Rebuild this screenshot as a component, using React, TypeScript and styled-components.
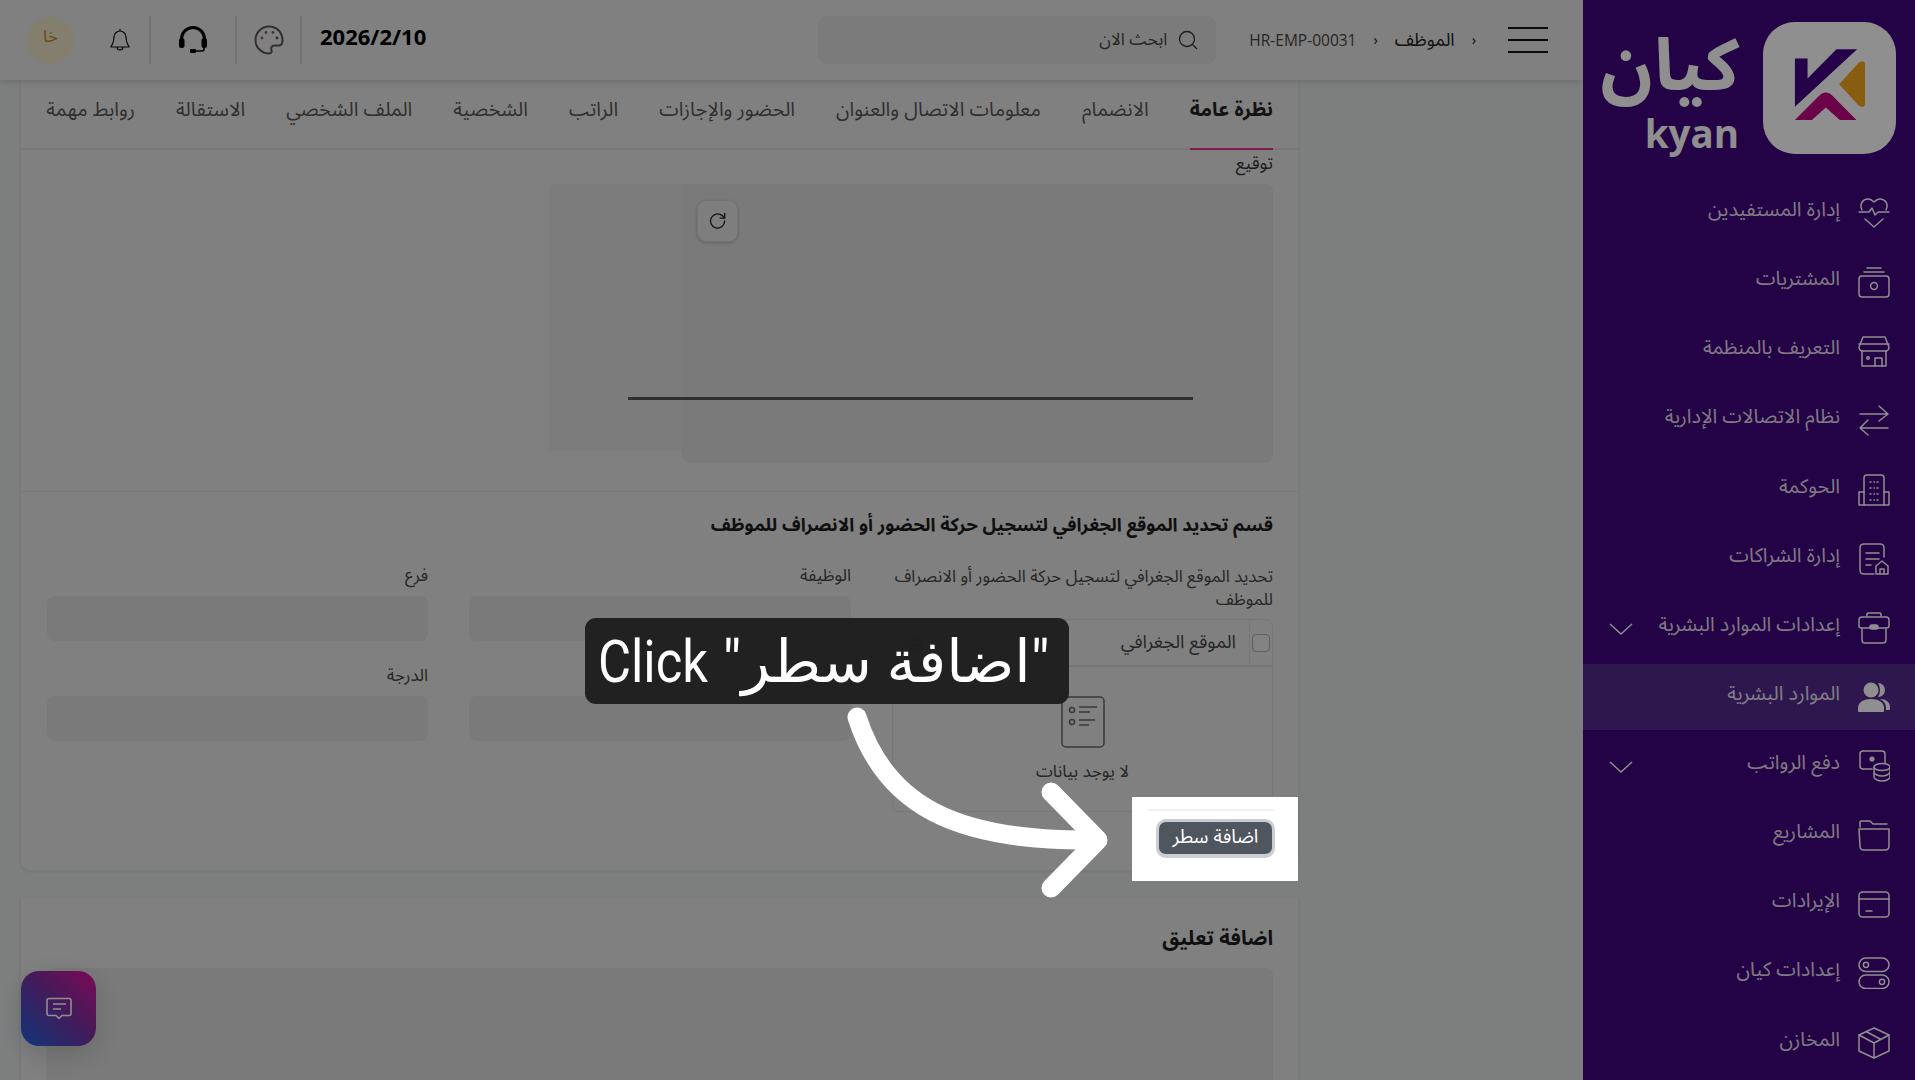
import * as React from 'react'
import styled, { createGlobalStyle } from 'styled-components'

const FONT = `"Noto Sans Arabic", "DejaVu Sans", "Noto Sans", sans-serif`

const Global = createGlobalStyle`
  html, body { margin: 0; padding: 0; background: #dfe3e3; }
  * { box-sizing: border-box; }
  body { font-family: ${FONT}; }
`

const Page = styled.div`
  position: relative;
  width: 1915px;
  height: 1080px;
  overflow: hidden;
  display: grid;
  grid-template-columns: 332px 1fr;
  direction: rtl;
  background: #dfe3e3;
`

/* sidebar */
const Side = styled.aside`
  background: #3f047c;
  display: flex;
  flex-direction: column;
  height: 1080px;
  overflow: hidden;
`
const Brand = styled.div`
  height: 180px;
  flex: none;
  display: flex;
  padding: 22px 19px 0 0;
  gap: 24px;
`
const Tile = styled.div`
  width: 133px;
  height: 132px;
  border-radius: 32px;
  background: #fff;
  display: flex;
  align-items: center;
  justify-content: center;
  flex: none;
`
const Wordmark = styled.div`
  color: #fff;
  display: flex;
  flex-direction: column;
  align-items: flex-start;
  width: 138px;
`
const WordAr = styled.div`
  font-size: 72px;
  font-weight: 700;
  line-height: 90px;
  height: 92px;
  white-space: nowrap;
`
const WordEn = styled.div`
  font-family: "Open Sans", sans-serif;
  font-size: 38.5px;
  font-weight: 700;
  line-height: 38px;
  direction: ltr;
`
const Nav = styled.nav`
  display: flex;
  flex-direction: column;
  gap: 3.14px;
`
const NavRow = styled.div<{ $active?: boolean }>`
  height: 66px;
  flex: none;
  display: flex;
  align-items: center;
  gap: 18px;
  padding: 0 25px 0 26px;
  color: #fff;
  background: ${p => (p.$active ? '#52298d' : 'transparent')};
  svg { flex: none; }
`
const NavText = styled.span`
  font-size: 19.8px;
  margin-top: -6px;
  opacity: .85;
  flex: 1;
  white-space: nowrap;
`

/* main column */
const Main = styled.main`
  position: relative;
  display: flex;
  flex-direction: column;
  min-width: 0;
  height: 1080px;
  overflow: hidden;
`
const Topbar = styled.header`
  height: 80px;
  flex: none;
  background: #e4e4e4;
  box-shadow: 0 2px 6px rgba(0,0,0,.14);
  display: flex;
  align-items: center;
  padding: 0 35px 0 27px;
  position: relative;
  z-index: 2;
`
const Burger = styled.div`
  width: 40px;
  height: 26px;
  flex: none;
  display: flex;
  flex-direction: column;
  justify-content: space-between;
  span { display: block; height: 2px; background: #111; }
`
const Crumbs = styled.div`
  display: flex;
  align-items: center;
  gap: 17px;
  margin-right: 32px;
  font-size: 18px;
  color: #222;
  white-space: nowrap;
`
const CrumbSep = styled.span`
  font-size: 14px;
  color: #222;
`
const CrumbId = styled.span`
  font-family: "Open Sans", sans-serif;
  font-size: 15.5px;
  color: #444;
  direction: ltr;
`
const Search = styled.div`
  width: 398px;
  height: 48px;
  margin-right: 33px;
  border-radius: 9px;
  background: #dcdcdc;
  display: flex;
  align-items: center;
  gap: 11px;
  padding: 0 18px;
  color: #444;
  font-size: 17px;
  flex: none;
`
const Tools = styled.div`
  margin-right: auto;
  display: flex;
  align-items: center;
  height: 48px;
`
const DateText = styled.div`
  font-family: "Open Sans", sans-serif;
  font-weight: 700;
  font-size: 22px;
  color: #000;
  direction: ltr;
  margin: -8px 0 0 18px;
`
const ToolCell = styled.div<{ $w: number }>`
  width: ${p => p.$w}px;
  height: 48px;
  border-right: 2px solid #cbcbcb;
  display: flex;
  align-items: center;
  justify-content: center;
`
const Avatar = styled.div`
  width: 47px;
  height: 47px;
  margin-right: 17px;
  border-radius: 50%;
  background: #ece0c4;
  color: #b78a2a;
  font-size: 17px;
  display: flex;
  align-items: center;
  justify-content: center;
  padding-bottom: 6px;
`

/* content */
const Body = styled.div`
  flex: 1;
  min-height: 0;
  padding: 0 284px 0 20px;
  display: flex;
  flex-direction: column;
  gap: 27px;
`
const Card = styled.section`
  flex: none;
  background: #e4e4e4;
  border: 1px solid #dadada;
  border-top: 0;
  border-radius: 0 0 10px 10px;
  box-shadow: 0 1px 3px rgba(0,0,0,.08);
`
const Tabs = styled.div`
  height: 70px;
  display: flex;
  gap: 41px;
  padding: 0 25px;
  border-bottom: 2px solid #d4d4d4;
`
const Tab = styled.div<{ $active?: boolean }>`
  height: 70px;
  line-height: 60px;
  font-size: 19.7px;
  white-space: nowrap;
  color: ${p => (p.$active ? '#222' : '#555')};
  font-weight: ${p => (p.$active ? 700 : 400)};
  border-bottom: ${p => (p.$active ? '2px solid #e0308f' : '0')};
`
const SignSection = styled.div`
  height: 342px;
  padding: 0 25px;
  border-bottom: 1px solid #d6d6d6;
`
const SignLabel = styled.div`
  font-size: 17.5px;
  line-height: 28px;
  height: 34px;
  color: #333;
`
const SignBox = styled.div`
  position: relative;
  width: 591px;
  height: 279px;
  background: #d9d9d9;
  border-radius: 8px;
`
const SignCanvas = styled.div`
  position: absolute;
  top: 0;
  right: 0;
  width: 724px;
  height: 267px;
  background: linear-gradient(to left, #d9d9d9 591px, #dddddd 591px);
  border-radius: 8px 8px 0 0;
`
const SignLine = styled.div`
  position: absolute;
  top: 213px;
  left: -54px;
  width: 565px;
  height: 3px;
  background: #555;
`
const RefreshBtn = styled.div`
  position: absolute;
  top: 16px;
  left: 15px;
  width: 41px;
  height: 42px;
  border: 1px solid #cfcfcf;
  border-radius: 9px;
  background: #e0e0e0;
  box-shadow: 0 1px 3px rgba(0,0,0,.2);
  display: flex;
  align-items: center;
  justify-content: center;
`
const GeoSection = styled.div`
  padding: 21px 25px 0;
  height: 378px;
`
const SectionTitle = styled.h2`
  margin: 0;
  font-size: 18.3px;
  line-height: 24px;
  font-weight: 700;
  color: #1c1c1c;
  white-space: nowrap;
`
const FieldGrid = styled.div`
  margin-top: 28px;
  display: grid;
  grid-template-columns: 381px 382px 381px;
  column-gap: 41px;
`
const GeoCol = styled.div`
  display: flex;
  flex-direction: column;
`
const Column = styled.div`
  display: flex;
  flex-direction: column;
  gap: 24px;
`
const Field = styled.div`
  display: flex;
  flex-direction: column;
  gap: 9px;
`
const FieldLabel = styled.label`
  font-size: 17px;
  line-height: 22px;
  height: 22px;
  color: #444;
`
const FieldInput = styled.div`
  height: 45px;
  border-radius: 8px;
  background: #d9d9d9;
`
const GeoHint = styled.div`
  font-size: 16.9px;
  line-height: 23px;
  color: #444;
  height: 54px;
`
const GeoTable = styled.div`
  height: 193px;
  border: 1px solid #d4d4d4;
  border-radius: 8px;
  display: flex;
  flex-direction: column;
`
const GeoHead = styled.div`
  height: 47px;
  flex: none;
  display: flex;
  align-items: center;
  border-bottom: 2px solid #d4d4d4;
  font-size: 18.5px;
  color: #444;
`
const CheckCell = styled.div`
  width: 23px;
  height: 46px;
  border-left: 1px solid #d4d4d4;
  display: flex;
  align-items: center;
  justify-content: center;
  flex: none;
`
const Check = styled.div`
  width: 18px;
  height: 18px;
  border: 1.5px solid #aaa;
  border-radius: 4px;
  background: #e8e8e8;
`
const GeoName = styled.div`
  flex: 1;
  padding-right: 13px;
  height: 46px;
  line-height: 46px;
  border-left: 1px solid #d4d4d4;
`
const GearCell = styled.div`
  width: 41px;
  display: flex;
  justify-content: center;
`
const EmptyState = styled.div`
  flex: 1;
  display: flex;
  flex-direction: column;
  align-items: center;
  padding: 29px 0 0 0;
  gap: 6px;
  font-size: 17px;
  color: #444;
`
const CommentBox = styled.div`
  margin: 0 25px;
  height: 150px;
  border-radius: 8px 8px 0 0;
  background: #d9d9d9;
`
const CommentTitle = styled(SectionTitle)`
  padding: 29px 25px 17px;
  font-size: 20.5px;
`
const ChatFab = styled.div`
  position: absolute;
  left: 21px;
  top: 971px;
  width: 75px;
  height: 75px;
  border-radius: 18px;
  background: linear-gradient(45deg, #1e60d8 0%, #7b2fa0 55%, #e0109a 100%);
  box-shadow: 0 8px 24px rgba(0,0,0,.14);
  display: flex;
  align-items: center;
  justify-content: center;
  z-index: 3;
`

/* coach mark, laid over the whole page */
const Scrim = styled.div`
  position: absolute;
  inset: 0;
  background: rgba(0,0,0,.44);
  z-index: 5;
`
const Callout = styled.div`
  position: absolute;
  left: 585px;
  top: 618px;
  width: 484px;
  height: 86px;
  padding: 2px 0 0 13px;
  border-radius: 11px;
  background: rgba(30,30,30,.97);
  color: #fff;
  font-family: Roboto, "DejaVu Sans", sans-serif;
  font-weight: 400;
  font-size: 59px;
  line-height: 84px;
  white-space: nowrap;
  direction: ltr;
  z-index: 7;
`
const CalloutWord = styled.span`
  display: inline-block;
  transform: scaleX(.86);
  transform-origin: left center;
  margin-right: -18px;
`
const Spotlight = styled.div`
  position: absolute;
  left: 1132px;
  top: 797px;
  width: 166px;
  height: 84px;
  background: #fff;
  z-index: 6;
  padding: 12px 24px 0 10px;
  direction: rtl;
`
const SpotRule = styled.div`
  height: 2px;
  background: #eef0f2;
  margin: 0 0 8px 6px;
  border-radius: 0 0 6px 6px;
`
const AddRow = styled.div`
  width: 119px;
  height: 39px;
  margin-right: -1px;
  border-radius: 10px;
  background: #4f565e;
  border: 3px solid #c9ced3;
  border-bottom-width: 4px;
  color: #fff;
  font-size: 19px;
  display: flex;
  align-items: center;
  justify-content: center;
  padding-bottom: 3px;
  white-space: nowrap;
`
const ArrowLayer = styled.svg`
  position: absolute;
  left: 0;
  top: 0;
  z-index: 7;
`

const line = { fill: 'none', stroke: 'currentColor', strokeWidth: 1.5, strokeLinecap: 'round', strokeLinejoin: 'round' } as const

const I32 = ({ children }: { children: React.ReactNode }) => (
  <svg width="32" height="32" viewBox="0 0 32 32" {...line}>{children}</svg>
)

const navItems: { label: string; icon: React.ReactNode; caret?: boolean; active?: boolean }[] = [
  { label: 'إدارة المستفيدين', icon: <I32><path d="M4 13C1 7 5 2 10 2c3 0 5 2 6 3 1-1 3-3 6-3 5 0 9 5 6 11" /><path d="M1 15h10l3-4 3 7 3-3h11" /><path d="M7 22l9 8 9-8" /></I32> },
  { label: 'المشتريات', icon: <I32><path d="M9 2h14M6 6h20" /><rect x="1" y="10" width="30" height="21" rx="3" /><circle cx="16" cy="20" r="3.4" /></I32> },
  { label: 'التعريف بالمنظمة', icon: <I32><path d="M5 2h22l4 10c0 3-2 4-4 4H5c-2 0-4-1-4-4z" /><path d="M1 9h30" /><path d="M4 16v15h24V16" /><path d="M17 31v-8h7v8" /><circle cx="10" cy="23" r="1.2" /></I32> },
  { label: 'نظام الاتصالات الإدارية', icon: <I32><path d="M2 10h28M21 2l9 8-9 7" /><path d="M30 24H2M10 16l-8 8 8 7" /></I32> },
  { label: 'الحوكمة', icon: <I32><path d="M6 31V4q0-3 3-3h14q3 0 3 3v27" /><path d="M6 18H1v13h30V18h-5" /><path d="M12 8h1M19 8h1M12 14h1M19 14h1M12 20h1M19 20h1M12 26h1M19 26h1M16 8h.5M16 14h.5M16 20h.5M16 26h.5" /></I32> },
  { label: 'إدارة الشراكات', icon: <I32><path d="M26 14V5q0-4-4-4H6Q2 1 2 5v22q0 4 4 4h10" /><path d="M8 10h13M8 16h13M8 22h5" /><path d="M18 31V23l6-5 6 5v8zM22 31v-5h4v5" /></I32> },
  { label: 'إعدادات الموارد البشرية', caret: true, icon: <I32><path d="M9 4V2q0-1 1-1h12q1 0 1 1v2" /><path d="M1 8q0-3 3-3h24q3 0 3 3v6q0 2-3 2H4q-3 0-3-2zM4 17v11q0 3 3 3h18q3 0 3-3V17" /><rect x="12" y="13" width="8" height="4" rx="2" fill="currentColor" /></I32> },
  { label: 'الموارد البشرية', active: true, icon: <svg width="32" height="32" viewBox="0 0 32 32" fill="currentColor"><circle cx="13" cy="9" r="7.5" /><path d="M0 30v-3c0-6 6-9 13-9s13 3 13 9v3q0 1-1 1H1q-1 0-1-1z" /><path d="M20 2a7 7 0 0 1 0 14q2-3 2-7t-2-7zM22 18c6 0 10 3 10 8v2q0 1-1 1h-3v-2c0-4-2-7-6-9z" /></svg> },
  { label: 'دفع الرواتب', caret: true, icon: <I32><path d="M14 19H5q-3 0-3-3V4q0-3 3-3h19q3 0 3 3v9" /><circle cx="14" cy="9" r="1.8" fill="currentColor" /><ellipse cx="24" cy="17" rx="8" ry="3.5" /><path d="M16 17v10c0 2 4 4 8 4s8-2 8-4V17M16 22c0 2 4 4 8 4s8-2 8-4" /></I32> },
  { label: 'المشاريع', icon: <I32><path d="M2 8V3q0-1 1-1h9l3 3h14" /><path d="M1 10h30v17q0 4-4 4H6q-4 0-4-4z" /></I32> },
  { label: 'الإيرادات', icon: <I32><rect x="1" y="4" width="30" height="25" rx="3.5" /><path d="M1 11h30M8 23h6" /></I32> },
  { label: 'إعدادات كيان', icon: <I32><rect x="1" y="1" width="30" height="13.5" rx="6.7" /><rect x="1" y="18" width="30" height="13.5" rx="6.7" /><circle cx="8" cy="7.8" r="2.6" /><circle cx="24" cy="24.8" r="2.6" /></I32> },
  { label: 'المخازن', icon: <I32><path d="M16 1l15 7v16l-15 7-15-7V8z" /><path d="M1 8l15 8 15-8M16 16v15M8 4.5l15 8" /></I32> },
]

const tabs = ['نظرة عامة', 'الانضمام', 'معلومات الاتصال والعنوان', 'الحضور والإجازات', 'الراتب', 'الشخصية', 'الملف الشخصي', 'الاستقالة', 'روابط مهمة']

const Caret = styled.svg`
  margin-top: 2px;
`

export default function App() {
  return (
    <Page>
      <Global />
      <Side>
        <Brand>
          <Tile>
            <svg width="133" height="132" viewBox="550 65 398 397">
              <path d="M645 175h38v60l87-88h62L645 320z" fill="#400484" />
              <path d="M778 252l60-66q18-8 18 10v112q0 18-18 10z" fill="#f5a61d" />
              <path d="M645 360l76-76q17-14 34 0l75 76h-50l-42-38-42 38z" fill="#c00683" />
            </svg>
          </Tile>
          <Wordmark>
            <WordAr>كيان</WordAr>
            <WordEn>kyan</WordEn>
          </Wordmark>
        </Brand>
        <Nav>
          {navItems.map(item => (
            <NavRow key={item.label} $active={item.active}>
              {item.icon}
              <NavText>{item.label}</NavText>
              {item.caret && (
                <Caret width="24" height="14" viewBox="0 0 24 14" fill="none" stroke="currentColor" strokeWidth="1.5">
                  <path d="M1 2l11 10L23 2" />
                </Caret>
              )}
            </NavRow>
          ))}
        </Nav>
      </Side>

      <Main>
        <Topbar>
          <Burger><span /><span /><span /></Burger>
          <Crumbs>
            <CrumbSep>‹</CrumbSep>
            <span>الموظف</span>
            <CrumbSep>‹</CrumbSep>
            <CrumbId>HR-EMP-00031</CrumbId>
          </Crumbs>
          <Search>
            <svg width="20" height="20" viewBox="0 0 20 20" fill="none" stroke="#333" strokeWidth="1.3"><circle cx="9" cy="9" r="7.5" /><path d="M14.5 14.5L19 19" /></svg>
            <span>ابحث الان</span>
          </Search>
          <Tools>
            <DateText>2026/2/10</DateText>
            <ToolCell $w={65}>
              <svg width="30" height="30" viewBox="0 0 30 30" fill="none" stroke="#555" strokeWidth="2">
                <path d="M15 1.5C7.5 1.5 1.5 7.5 1.5 15S7.5 28.5 15 28.5c2.5 0 3-1.500 2.500-3-.8-2.500 0-5 3-5h4c2.500 0 4-1.500 4-5C28.500 7 22.500 1.500 15 1.500z" />
                <circle cx="8" cy="13" r="1.4" fill="#8a5a60" stroke="none" /><circle cx="12" cy="7.500" r="1.400" fill="#8a5a60" stroke="none" /><circle cx="19" cy="7.500" r="1.400" fill="#7a5a8a" stroke="none" /><circle cx="23" cy="13" r="1.400" fill="#555" stroke="none" />
              </svg>
            </ToolCell>
            <ToolCell $w={86}>
              <svg width="28" height="28" viewBox="0 0 28 28" fill="none" stroke="#000" strokeWidth="3">
                <path d="M2.500 15V13a11.500 11.500 0 0 1 23 0v2" />
                <rect x="0" y="12" width="5.500" height="10" rx="2.500" fill="#000" stroke="none" /><rect x="22.500" y="12" width="5.500" height="10" rx="2.500" fill="#000" stroke="none" />
                <path d="M25 20v3q0 2-2 2h-6" strokeWidth="1.600" /><rect x="11" y="23" width="6" height="4" rx="1" fill="#000" stroke="none" />
              </svg>
            </ToolCell>
            <ToolCell $w={60}>
              <svg width="20" height="24" viewBox="0 0 20 24" fill="none" stroke="#111" strokeWidth="1.200" strokeLinejoin="round">
                <path d="M10 3a6 6 0 0 0-6 6c0 6-2 7-3 10h18c-1-3-3-4-3-10a6 6 0 0 0-6-6zM10 1v2M7 19a3 3 0 0 0 6 0" />
              </svg>
            </ToolCell>
            <Avatar>خا</Avatar>
          </Tools>
        </Topbar>

        <Body>
          <Card>
            <Tabs>
              {tabs.map((t, i) => <Tab key={t} $active={i === 0}>{t}</Tab>)}
            </Tabs>
            <SignSection>
              <SignLabel>توقيع</SignLabel>
              <SignBox>
                <SignCanvas />
                <SignLine />
                <RefreshBtn>
                  <svg width="20" height="20" viewBox="0 0 24 24" fill="none" stroke="#222" strokeWidth="1.600" strokeLinecap="round">
                    <path d="M20 12a8.500 8.500 0 1 1-3-6.500L20 8" /><path d="M20 3v5.500h-5.500" />
                  </svg>
                </RefreshBtn>
              </SignBox>
            </SignSection>
            <GeoSection>
              <SectionTitle>قسم تحديد الموقع الجغرافي لتسجيل حركة الحضور أو الانصراف للموظف</SectionTitle>
              <FieldGrid>
                <GeoCol>
                  <GeoHint>تحديد الموقع الجغرافي لتسجيل حركة الحضور أو الانصراف للموظف</GeoHint>
                  <GeoTable>
                    <GeoHead>
                      <CheckCell><Check /></CheckCell>
                      <GeoName>الموقع الجغرافي</GeoName>
                      <GearCell>
                        <svg width="18" height="18" viewBox="0 0 24 24" fill="none" stroke="#555" strokeWidth="1.500"><circle cx="12" cy="12" r="3.500" /><path d="M12 2l2 3 4-1 1 4 3 2-2 2 2 2-3 2-1 4-4-1-2 3-2-3-4 1-1-4-3-2 2-2-2-2 3-2 1-4 4 1z" /></svg>
                      </GearCell>
                    </GeoHead>
                    <EmptyState>
                      <svg width="44" height="52" viewBox="0 0 44 52" fill="none" stroke="#666" strokeWidth="1.500">
                        <rect x="1" y="1" width="42" height="50" rx="4" />
                        <circle cx="11" cy="14" r="2.500" /><circle cx="11" cy="26" r="2.500" />
                        <path d="M18 11h18M18 16h11M18 24h16M18 29h10" />
                      </svg>
                      <span>لا يوجد بيانات</span>
                    </EmptyState>
                  </GeoTable>
                </GeoCol>
                <Column>
                  <Field><FieldLabel>الوظيفة</FieldLabel><FieldInput /></Field>
                  <Field><FieldLabel>المدير المباشر</FieldLabel><FieldInput /></Field>
                </Column>
                <Column>
                  <Field><FieldLabel>فرع</FieldLabel><FieldInput /></Field>
                  <Field><FieldLabel>الدرجة</FieldLabel><FieldInput /></Field>
                </Column>
              </FieldGrid>
            </GeoSection>
          </Card>
          <Card>
            <CommentTitle>اضافة تعليق</CommentTitle>
            <CommentBox />
          </Card>
        </Body>
        <ChatFab>
          <svg width="26" height="24" viewBox="0 0 26 24" fill="none" stroke="#fff" strokeWidth="1.600" strokeLinejoin="round">
            <path d="M3 1.500h20q2 0 2 2v13q0 2-2 2h-7l-3 3-3-3H3q-2 0-2-2v-13q0-2 2-2z" /><path d="M7 7h13M7 12h8" />
          </svg>
        </ChatFab>
      </Main>

      <Scrim />
      <Spotlight>
        <SpotRule />
        <AddRow>اضافة سطر</AddRow>
      </Spotlight>
      <Callout><CalloutWord>Click</CalloutWord> "اضافة سطر"</Callout>
      <ArrowLayer width="1915" height="1080" viewBox="0 0 1915 1080" fill="none" stroke="#fff" strokeWidth="19" strokeLinecap="round" strokeLinejoin="round">
        <path d="M857 717C885 805 955 841 1090 840" />
        <path d="M1051 792l47 48-47 48" />
      </ArrowLayer>
    </Page>
  )
}
